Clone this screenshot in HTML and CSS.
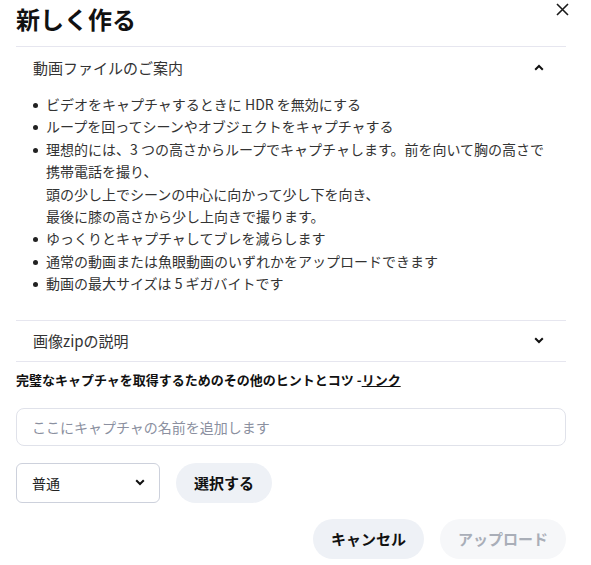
FILE: index.html
```html
<!DOCTYPE html>
<html lang="ja">
<head>
  <meta charset="UTF-8" />
  <meta name="viewport" content="width=device-width, initial-scale=1.0" />
  <title>新しく作る</title>
  <link rel="stylesheet" href="styles.css">
</head>
<body>
  <div class="dialog">
    <div class="dialog-head">
      <h2>新しく作る</h2>
      <button class="close" aria-label="閉じる">
        <svg width="13" height="13" viewBox="0 0 13 13"><path d="M1 1L12 12M12 1L1 12" stroke="#1a1a1a" stroke-width="1.6" fill="none"/></svg>
      </button>
    </div>

    <div class="section">
      <div class="section-head">
        <span>動画ファイルのご案内</span>
        <svg width="10" height="7" viewBox="0 0 10 7"><path d="M1.2 5.8L5 2L8.8 5.8" stroke="#111" stroke-width="2" fill="none"/></svg>
      </div>
      <ul class="tips">
        <li>ビデオをキャプチャするときに HDR を無効にする</li>
        <li>ループを回ってシーンやオブジェクトをキャプチャする</li>
        <li>理想的には、3 つの高さからループでキャプチャします。前を向いて胸の高さで<br>携帯電話を撮り、<br>頭の少し上でシーンの中心に向かって少し下を向き、<br>最後に膝の高さから少し上向きで撮ります。</li>
        <li>ゆっくりとキャプチャしてブレを減らします</li>
        <li>通常の動画または魚眼動画のいずれかをアップロードできます</li>
        <li>動画の最大サイズは 5 ギガバイトです</li>
      </ul>
    </div>

    <div class="section last">
      <div class="section-head">
        <span>画像zipの説明</span>
        <svg width="10" height="7" viewBox="0 0 10 7"><path d="M1.2 1.2L5 5L8.8 1.2" stroke="#111" stroke-width="2" fill="none"/></svg>
      </div>
    </div>

    <p class="more">完璧なキャプチャを取得するためのその他のヒントとコツ -<a href="#">リンク</a></p>

    <input class="name" type="text" placeholder="ここにキャプチャの名前を追加します" />

    <div class="row">
      <div class="select">
        <span>普通</span>
        <svg width="10" height="7" viewBox="0 0 10 7"><path d="M1.2 1.2L5 5L8.8 1.2" stroke="#111" stroke-width="2" fill="none"/></svg>
      </div>
      <button class="btn">選択する</button>
    </div>

    <div class="actions">
      <button class="btn">キャンセル</button>
      <button class="btn disabled">アップロード</button>
    </div>
  </div>
</body>
</html>
```

FILE: styles.css
```css
body {
  margin: 0;
  background: #fff;
  font-family: "Noto Sans CJK JP", "Noto Sans", sans-serif;
  color: #333;
}
.dialog {
  width: 550px;
  padding-left: 16px;
}
.dialog-head {
  display: flex;
  justify-content: space-between;
  align-items: flex-start;
  height: 46px;
}
.dialog-head h2 {
  margin: 0;
  font-size: 24px;
  line-height: 38px;
  font-weight: 700;
  color: #111;
}
.close {
  width: 24px;
  height: 18px;
  margin-right: -8px;
  padding: 0;
  border: none;
  background: none;
  display: flex;
  align-items: center;
  justify-content: center;
}
.section {
  border-top: 1px solid #e6e6ef;
}
.section.last {
  border-bottom: 1px solid #e6e6ef;
}
.section-head {
  height: 40px;
  padding: 0 22px 0 17px;
  display: flex;
  align-items: center;
  justify-content: space-between;
  font-size: 15px;
  color: #333;
}
.tips {
  list-style: none;
  margin: 0;
  padding: 6px 0 25px 30px;
  font-size: 14px;
  line-height: 22.4px;
  color: #333;
}
.tips li::before {
  content: "";
  display: inline-block;
  width: 5px;
  height: 5px;
  border-radius: 50%;
  background: #222;
  margin-left: -13px;
  margin-right: 8px;
  vertical-align: middle;
  position: relative;
  top: -1px;
}
.more {
  margin: 8px 0 18px;
  font-size: 13px;
  line-height: 20px;
  font-weight: 700;
  color: #111;
}
.more a {
  color: #111;
  text-decoration: underline;
}
.name {
  display: block;
  box-sizing: border-box;
  width: 100%;
  height: 38px;
  padding: 0 15px;
  border: 1px solid #e0e2ea;
  border-radius: 8px;
  font-family: inherit;
  font-size: 14px;
  outline: none;
}
.name::placeholder {
  color: #8b90a0;
}
.row {
  display: flex;
  gap: 16px;
  margin-top: 17px;
}
.select {
  box-sizing: border-box;
  width: 144px;
  height: 40px;
  padding: 0 14px 0 15px;
  border: 1px solid #cdd1dc;
  border-radius: 6px;
  display: flex;
  align-items: center;
  justify-content: space-between;
  font-size: 14px;
  color: #222;
}
.btn {
  height: 40px;
  padding: 0 18px;
  border: none;
  border-radius: 20px;
  background: #eef1f6;
  font-family: inherit;
  font-size: 15px;
  font-weight: 700;
  color: #111;
  cursor: pointer;
}
.btn.disabled {
  background: #f6f7f9;
  color: #a9aeb8;
  cursor: default;
}
.actions {
  display: flex;
  justify-content: flex-end;
  gap: 16px;
  margin-top: 16px;
}
```
